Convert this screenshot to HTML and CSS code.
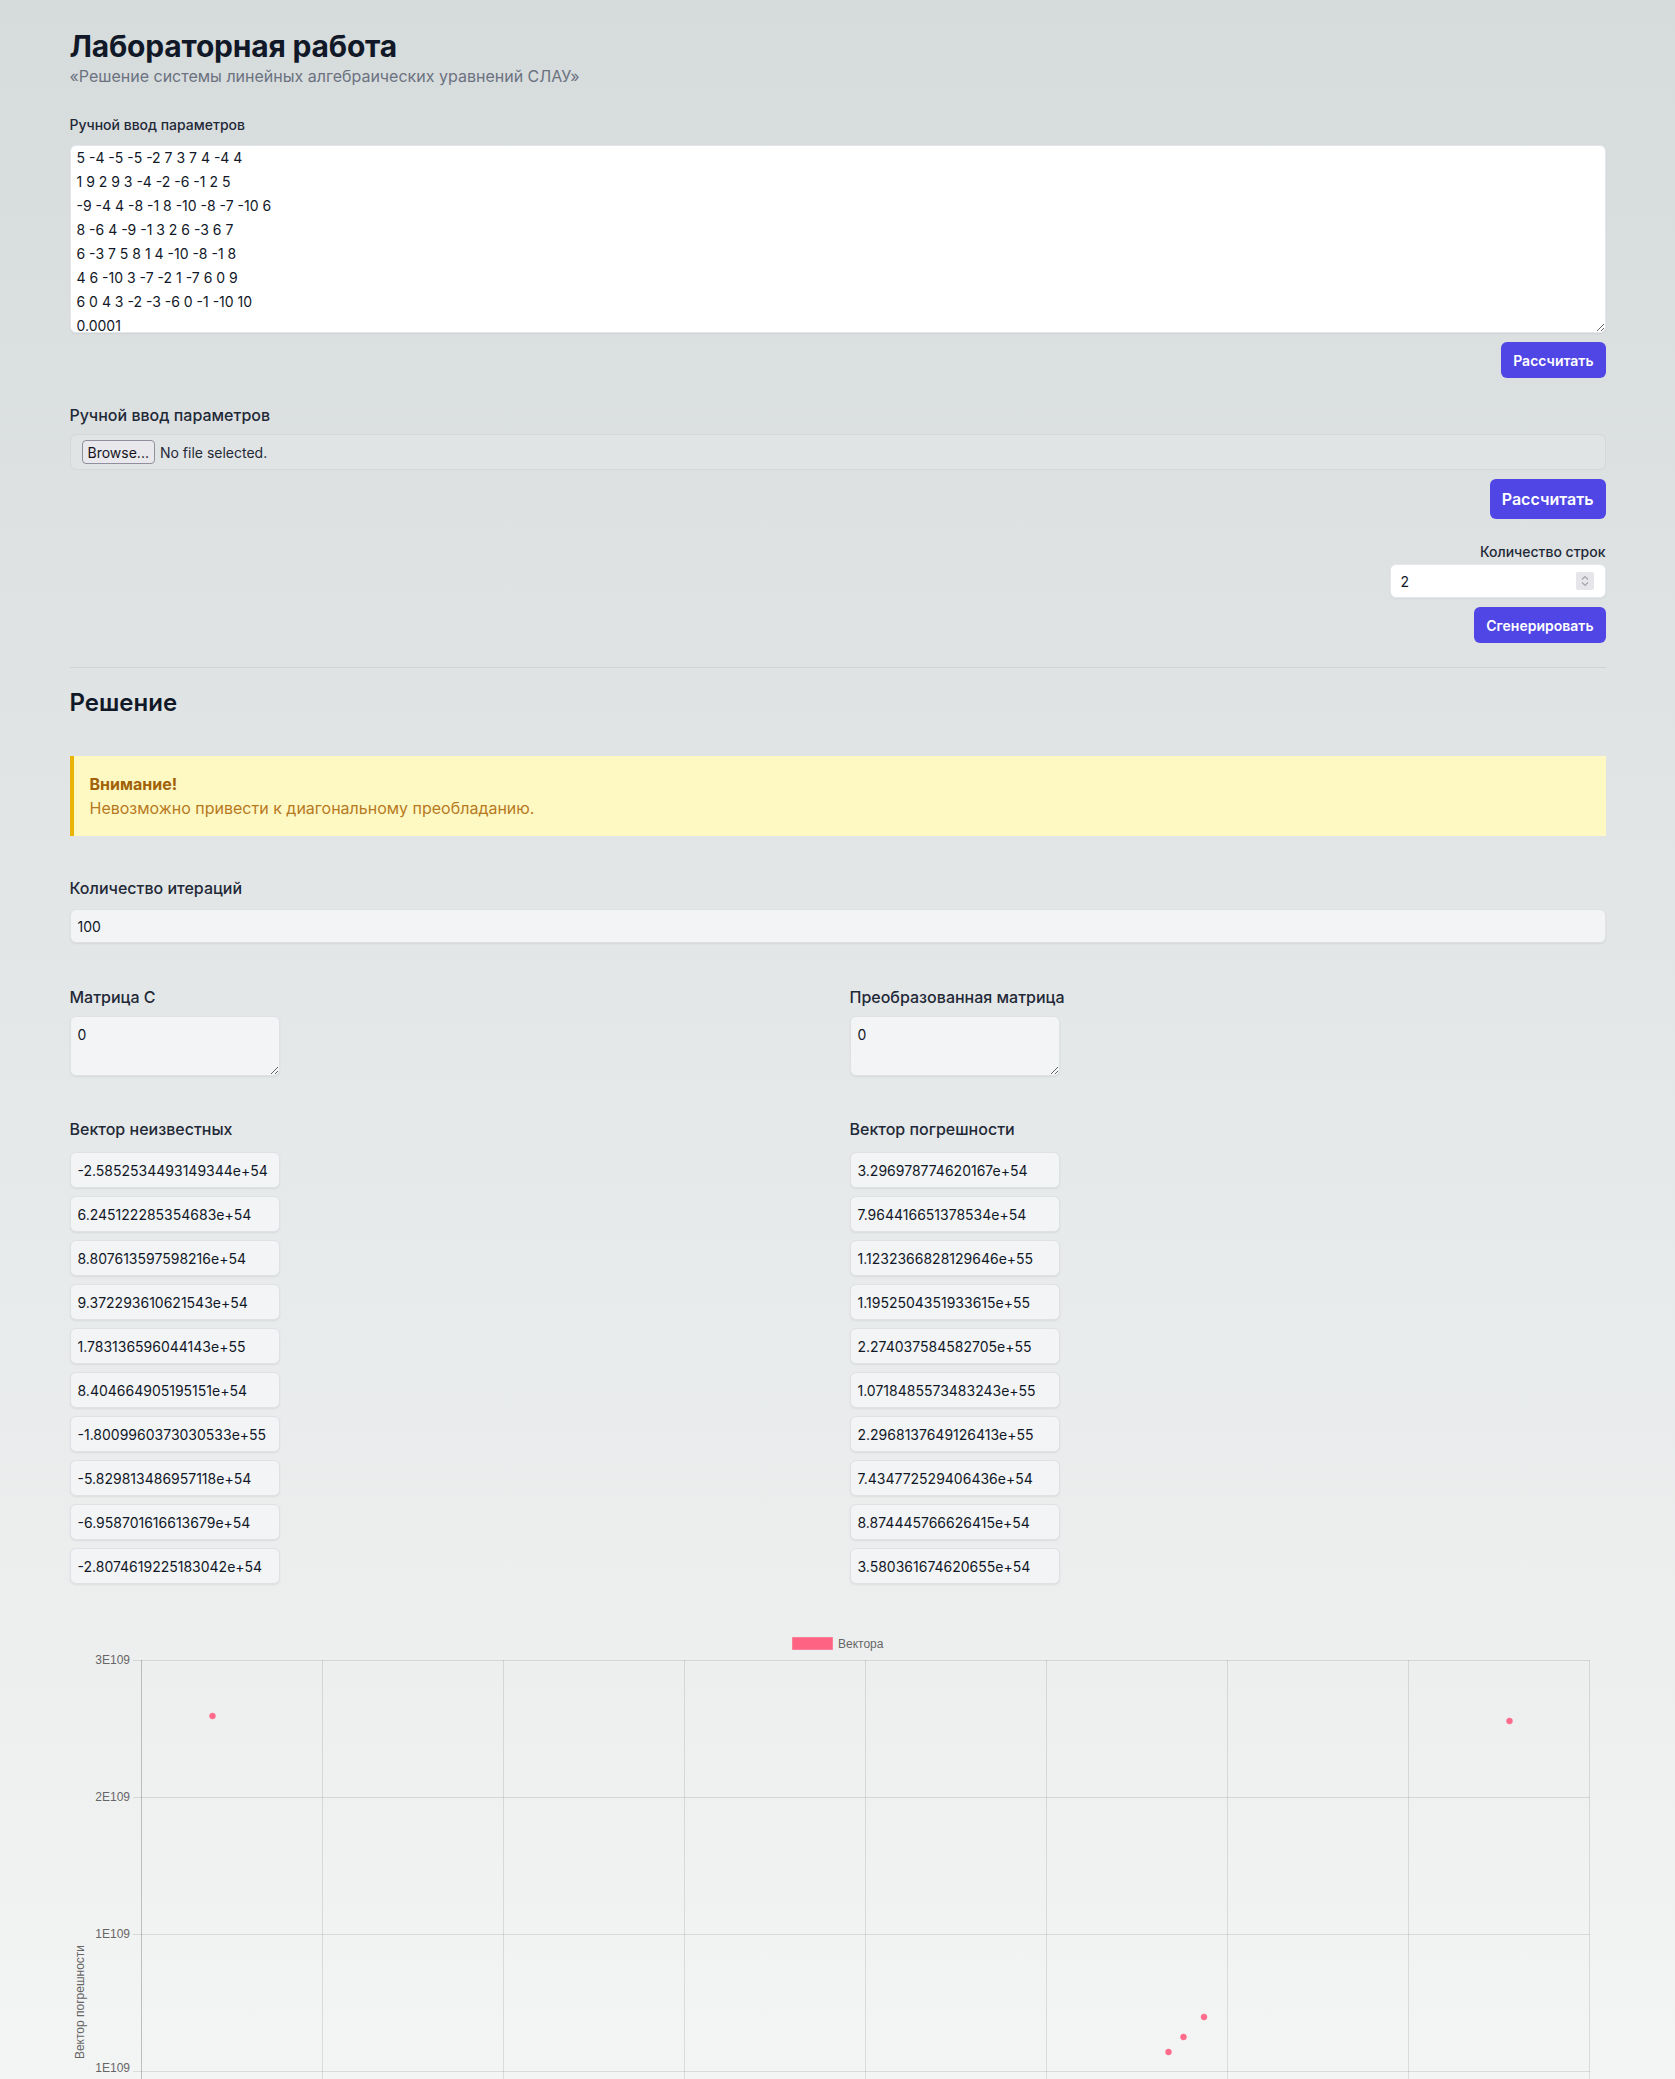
FILE: index.html
```html
<!DOCTYPE html>
<html lang="ru">
<head>
<meta charset="utf-8">
<title>Лабораторная работа</title>
<link rel="stylesheet" href="styles.css">
</head>
<body>
<div class="page">
  <header class="header">
    <h1 class="title">Лабораторная работа</h1>
    <p class="subtitle">«Решение системы линейных алгебраических уравнений СЛАУ»</p>
  </header>

  <section class="manual">
    <label class="label-sm">Ручной ввод параметров</label>
    <textarea class="matrix-input">5 -4 -5 -5 -2 7 3 7 4 -4 4
1 9 2 9 3 -4 -2 -6 -1 2 5
-9 -4 4 -8 -1 8 -10 -8 -7 -10 6
8 -6 4 -9 -1 3 2 6 -3 6 7
6 -3 7 5 8 1 4 -10 -8 -1 8
4 6 -10 3 -7 -2 1 -7 6 0 9
6 0 4 3 -2 -3 -6 0 -1 -10 10
0.0001</textarea>
    <div class="actions actions-1"><button class="btn btn-sm">Рассчитать</button></div>
  </section>

  <section class="file">
    <label class="label-md">Ручной ввод параметров</label>
    <div class="file-box"><span class="browse">Browse...</span><span class="file-name">No file selected.</span></div>
    <div class="actions actions-2"><button class="btn btn-lg">Рассчитать</button></div>
  </section>

  <section class="generate">
    <label class="label-sm gen-label">Количество строк</label>
    <div class="num-input">
      <span class="num-value">2</span>
      <span class="spinner"><svg width="18" height="18" viewBox="0 0 18 18"><path d="M6 7.5 L9 4.5 L12 7.5" fill="none" stroke="#a3a3a8" stroke-width="1.1"/><path d="M6 10.5 L9 13.5 L12 10.5" fill="none" stroke="#a3a3a8" stroke-width="1.1"/></svg></span>
    </div>
    <div class="actions actions-3"><button class="btn btn-sm">Сгенерировать</button></div>
  </section>

  <hr class="divider">

  <h2 class="section-title">Решение</h2>

  <div class="alert">
    <p class="alert-title">Внимание!</p>
    <p class="alert-text">Невозможно привести к диагональному преобладанию.</p>
  </div>

  <div class="field iter">
    <label class="label-md">Количество итераций</label>
    <div class="out-input wide">100</div>
  </div>

  <div class="two-col mats">
    <div>
      <label class="label-md">Матрица С</label>
      <textarea class="out-area" readonly>0</textarea>
    </div>
    <div>
      <label class="label-md">Преобразованная матрица</label>
      <textarea class="out-area" readonly>0</textarea>
    </div>
  </div>

  <div class="two-col vecs">
    <div>
      <label class="label-md">Вектор неизвестных</label>
      <div class="vec-list">
        <div class="out-input">-2.5852534493149344e+54</div>
        <div class="out-input">6.245122285354683e+54</div>
        <div class="out-input">8.807613597598216e+54</div>
        <div class="out-input">9.372293610621543e+54</div>
        <div class="out-input">1.783136596044143e+55</div>
        <div class="out-input">8.404664905195151e+54</div>
        <div class="out-input">-1.8009960373030533e+55</div>
        <div class="out-input">-5.829813486957118e+54</div>
        <div class="out-input">-6.958701616613679e+54</div>
        <div class="out-input">-2.8074619225183042e+54</div>
      </div>
    </div>
    <div>
      <label class="label-md">Вектор погрешности</label>
      <div class="vec-list">
        <div class="out-input">3.296978774620167e+54</div>
        <div class="out-input">7.964416651378534e+54</div>
        <div class="out-input">1.1232366828129646e+55</div>
        <div class="out-input">1.1952504351933615e+55</div>
        <div class="out-input">2.274037584582705e+55</div>
        <div class="out-input">1.0718485573483243e+55</div>
        <div class="out-input">2.2968137649126413e+55</div>
        <div class="out-input">7.434772529406436e+54</div>
        <div class="out-input">8.874445766626415e+54</div>
        <div class="out-input">3.580361674620655e+54</div>
      </div>
    </div>
  </div>

  <div class="chart">
    <svg class="chart-svg" width="1536" height="780" viewBox="0 0 1536 780">
      <g class="legend">
        <rect x="722.5" y="13.5" width="40" height="12" fill="#ff6384" stroke="#ff6384" stroke-opacity="0.6"/>
        <text x="768" y="24" class="chart-text">Вектора</text>
      </g>
      <g class="grid" stroke="rgba(0,0,0,0.1)" stroke-width="1">
        <line x1="252.5" y1="36" x2="252.5" y2="729"/>
        <line x1="433.5" y1="36" x2="433.5" y2="729"/>
        <line x1="614.5" y1="36" x2="614.5" y2="729"/>
        <line x1="795.5" y1="36" x2="795.5" y2="729"/>
        <line x1="976.5" y1="36" x2="976.5" y2="729"/>
        <line x1="1157.5" y1="36" x2="1157.5" y2="729"/>
        <line x1="1338.5" y1="36" x2="1338.5" y2="729"/>
        <line x1="1519.5" y1="36" x2="1519.5" y2="729"/>
        <line x1="63" y1="36.5" x2="1520" y2="36.5"/>
        <line x1="63" y1="173.5" x2="1520" y2="173.5"/>
        <line x1="63" y1="310.5" x2="1520" y2="310.5"/>
        <line x1="63" y1="447.5" x2="1520" y2="447.5"/>
        <line x1="63" y1="584.5" x2="1520" y2="584.5"/>
        <line x1="63" y1="721.5" x2="1520" y2="721.5"/>
      </g>
      <line x1="71.5" y1="36" x2="71.5" y2="729" stroke="rgba(0,0,0,0.22)"/>
      <g class="ticks">
        <text x="60" y="40" text-anchor="end" class="chart-text">3E109</text>
        <text x="60" y="177" text-anchor="end" class="chart-text">2E109</text>
        <text x="60" y="314" text-anchor="end" class="chart-text">1E109</text>
        <text x="60" y="448" text-anchor="end" class="chart-text">1E109</text>
        <text x="60" y="588" text-anchor="end" class="chart-text">0</text>
        <text x="60" y="725" text-anchor="end" class="chart-text">0</text>
      </g>
      <text class="chart-text" transform="translate(14 378) rotate(-90)" text-anchor="middle">Вектор погрешности</text>
      <g fill="rgba(255,99,132,0.95)" stroke="rgba(255,99,132,0.4)" stroke-width="1">
        <circle cx="142.5" cy="92" r="3"/>
        <circle cx="1439.5" cy="97" r="3"/>
        <circle cx="1134" cy="393" r="3"/>
        <circle cx="1113.5" cy="413" r="3"/>
        <circle cx="1098.5" cy="428" r="3"/>
      </g>
    </svg>
  </div>
</div>
</body>
</html>
```

FILE: styles.css
```css
* { box-sizing: border-box; }

html { background: #f6f7f7; }

body {
  margin: 0;
  font-family: Inter, "Noto Sans", "Liberation Sans", sans-serif;
  color: #111827;
  background: linear-gradient(to bottom, #d6dbdc 0%, #f3f4f4 85%, #f7f8f8 100%);
  min-height: 100vh;
}

.page {
  max-width: 1536px;
  margin: 0 auto;
  padding-top: 28px;
  padding-bottom: 40px;
}

.title {
  margin: 0;
  font-size: 30px;
  line-height: 36px;
  font-weight: 700;
  color: #111827;
  letter-spacing: -0.2px;
}

.subtitle {
  margin: 0;
  font-size: 16px;
  line-height: 24px;
  color: #6b7280;
}

.label-sm {
  display: block;
  font-size: 14px;
  line-height: 20px;
  font-weight: 500;
  color: #1f2937;
}

.label-md {
  display: block;
  font-size: 16px;
  line-height: 24px;
  font-weight: 500;
  color: #1f2937;
}

.manual { margin-top: 27px; }

.matrix-input {
  display: block;
  width: 100%;
  height: 188px;
  margin-top: 10px;
  padding: 0 6px;
  border: 1px solid #e5e7eb;
  border-radius: 6px;
  background: #ffffff;
  box-shadow: 0 1px 2px rgba(0, 0, 0, 0.06);
  font-family: Inter, "Noto Sans", sans-serif;
  font-size: 14px;
  line-height: 24px;
  color: #111827;
  resize: vertical;
  overflow: hidden;
}

.actions {
  display: flex;
  justify-content: flex-end;
}
.actions-1 { margin-top: 9px; }
.actions-2 { margin-top: 9px; }
.actions-3 { margin-top: 9px; }

.btn {
  border: none;
  background: #4f46e5;
  color: #ffffff;
  font-family: Inter, "Noto Sans", sans-serif;
  font-weight: 600;
  border-radius: 6px;
  cursor: pointer;
}
.btn-sm {
  height: 36px;
  padding: 0 12px;
  font-size: 14px;
}
.btn-lg {
  height: 40px;
  padding: 0 12px;
  font-size: 16px;
}

.file { margin-top: 25px; }

.file-box {
  display: flex;
  align-items: center;
  height: 36px;
  margin-top: 7px;
  padding: 0 11px;
  border: 1px solid #d4d8dc;
  border-radius: 6px;
  background: #e1e4e5;
  font-size: 14px;
  color: #1f2937;
}
.browse {
  display: inline-flex;
  align-items: center;
  height: 24px;
  padding: 0 5px;
  border: 1px solid #8f8f9d;
  border-radius: 4px;
  background: #e9e9ed;
  font-size: 14px;
  color: #15141a;
}
.file-name { margin-left: 5px; }

.generate {
  margin-top: 23px;
  display: flex;
  flex-direction: column;
  align-items: flex-end;
}
.gen-label { text-align: right; }

.num-input {
  position: relative;
  display: flex;
  align-items: center;
  width: 216px;
  height: 34px;
  margin-top: 2px;
  padding: 0 10px;
  background: #ffffff;
  border: 1px solid #e5e7eb;
  border-radius: 6px;
  box-shadow: 0 1px 2px rgba(0, 0, 0, 0.05);
  font-size: 14px;
  color: #111827;
}
.num-value { flex: 1; }
.spinner {
  display: flex;
  align-items: center;
  justify-content: center;
  width: 18px;
  height: 18px;
  background: #e6e6ea;
  border-radius: 2px;
  margin-right: 1px;
}

.divider {
  margin: 24px 0 0;
  border: none;
  border-top: 1px solid #cfd3d6;
}

.section-title {
  margin: 19px 0 0;
  font-size: 24px;
  line-height: 32px;
  font-weight: 600;
  color: #111827;
}

.alert {
  margin-top: 37px;
  padding: 16px 16px 16px 16px;
  background: #fef9c3;
  border-left: 4px solid #eab308;
}
.alert p { margin: 0; font-size: 16px; line-height: 24px; }
.alert-title { font-weight: 700; color: #a16207; }
.alert-text { color: #b7791f; }

.iter { margin-top: 40px; }

.out-input {
  display: flex;
  align-items: center;
  height: 36px;
  padding: 0 7px;
  background: #f3f4f6;
  border: 1px solid #dfe1e6;
  border-radius: 6px;
  box-shadow: 0 1px 2px rgba(0, 0, 0, 0.07);
  font-size: 14px;
  color: #111827;
  width: 210px;
  white-space: nowrap;
  overflow: hidden;
}
.out-input.wide {
  width: 100%;
  height: 34px;
  margin-top: 9px;
}

.two-col {
  display: grid;
  grid-template-columns: 1fr 1fr;
  column-gap: 24px;
}
.mats { margin-top: 42px; }
.vecs { margin-top: 41px; }

.out-area {
  display: block;
  width: 210px;
  height: 60px;
  margin-top: 7px;
  padding: 8px 7px;
  background: #f3f4f6;
  border: 1px solid #dfe1e6;
  border-radius: 6px;
  box-shadow: 0 1px 2px rgba(0, 0, 0, 0.07);
  font-family: Inter, "Noto Sans", sans-serif;
  font-size: 14px;
  line-height: 20px;
  color: #111827;
  resize: both;
  overflow: hidden;
}

.vec-list {
  display: flex;
  flex-direction: column;
  gap: 8px;
  margin-top: 11px;
}

.chart { margin-top: 40px; }
.chart-svg { display: block; }
.chart-text {
  font-family: "Liberation Sans", Arial, sans-serif;
  font-size: 12px;
  fill: #666666;
}
```
